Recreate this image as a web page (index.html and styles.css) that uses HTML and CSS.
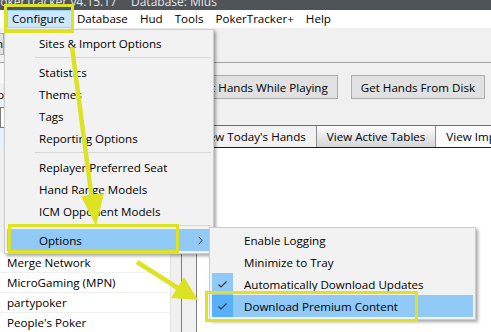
FILE: index.html
```html
<!DOCTYPE html>
<html>
<head>
<meta charset="utf-8">
<link rel="stylesheet" href="styles.css">
</head>
<body>
<div class="app">
  <header class="titlebar">
    <span class="title-text"><span>PokerTracker v4.15.17</span><span>Database: Mius</span></span>
  </header>
  <nav class="menubar">
    <span class="mb-item is-hot">Configure</span>
    <span class="mb-item">Database</span>
    <span class="mb-item">Hud</span>
    <span class="mb-item">Tools</span>
    <span class="mb-item">PokerTracker+</span>
    <span class="mb-item">Help</span>
  </nav>
  <div class="toolbar"><span class="tb-btn">Open</span></div>
  <div class="workspace">
    <aside class="left">
      <div class="left-top">
        <div class="lt-pad"></div>
        <div class="lt-label">p</div>
        <div class="lt-input"></div>
        <div class="lt-sel"></div>
      </div>
      <div class="site-list">
        <div class="site-row">Merge Network</div>
        <div class="site-row">MicroGaming (MPN)</div>
        <div class="site-row">partypoker</div>
        <div class="site-row">People's Poker</div>
      </div>
    </aside>
    <div class="splitter"></div>
    <section class="right">
      <div class="btnrow">
        <button class="btn">Get Hands While Playing</button>
        <button class="btn">Get Hands From Disk</button>
      </div>
      <div class="tabs">
        <div class="tab">View Today's Hands</div>
        <div class="tab is-active">View Active Tables</div>
        <div class="tab is-last">View Imported Hands</div>
      </div>
      <div class="tab-body"></div>
    </section>
  </div>

  <div class="menu">
    <div class="mi">Sites &amp; Import Options</div>
    <div class="msep"></div>
    <div class="mi">Statistics</div>
    <div class="mi">Themes</div>
    <div class="mi">Tags</div>
    <div class="mi">Reporting Options</div>
    <div class="msep"></div>
    <div class="mi">Replayer Preferred Seat</div>
    <div class="mi">Hand Range Models</div>
    <div class="mi">ICM Opponent Models</div>
    <div class="msep"></div>
    <div class="mi is-open">Options<svg class="chev" width="5" height="9" viewBox="0 0 5 9"><path d="M0.8 0.8 L4 4.5 L0.8 8.2" fill="none" stroke="#333" stroke-width="1"/></svg></div>
  </div>

  <div class="submenu">
    <div class="si"><span class="chk"></span>Enable Logging</div>
    <div class="si"><span class="chk"></span>Minimize to Tray</div>
    <div class="si is-checked"><span class="chk"><svg width="21" height="22" viewBox="0 0 21 22"><path d="M6.5 11.5 L9 14 L14.5 8.5" fill="none" stroke="#333" stroke-width="1.1"/></svg></span>Automatically Download Updates</div>
    <div class="si is-checked is-hover"><span class="chk"><svg width="21" height="22" viewBox="0 0 21 22"><path d="M6.5 11.5 L9 14 L14.5 8.5" fill="none" stroke="#333" stroke-width="1.1"/></svg></span>Download Premium Content</div>
  </div>

  <div class="mark mark-configure"></div>
  <div class="mark mark-options"></div>
  <div class="mark mark-download"></div>

  <svg class="arrows" width="491" height="332" viewBox="0 0 491 332">
    <line x1="72" y1="47" x2="92" y2="200" stroke="#dde222" stroke-width="4.5"/>
    <polygon points="96,226 81,196 104,193" fill="#dde222"/>
    <line x1="137" y1="262" x2="181" y2="290" stroke="#dde222" stroke-width="4.5"/>
    <polygon points="198,300 171,298 184,277" fill="#dde222"/>
  </svg>
</div>
</body>
</html>
```

FILE: styles.css
```css
* { box-sizing: border-box; margin: 0; padding: 0; }
html, body { width: 491px; height: 332px; overflow: hidden; }
body {
  font-family: "Open Sans", "Noto Sans", "DejaVu Sans", sans-serif;
  font-size: 11.6px;
  color: #000;
  background: #f0f0f0;
}
.app {
  position: relative;
  width: 491px;
  height: 332px;
  overflow: hidden;
  display: flex;
  flex-direction: column;
}

/* title bar */
.titlebar {
  height: 10px;
  flex: none;
  background: #4f5459;
  color: #e6e6e6;
  overflow: hidden;
  font-size: 12px;
  line-height: 12px;
  white-space: nowrap;
}
.title-text { display: flex; gap: 14px; margin: -4px 0 0 -7px; }

/* menu bar */
.menubar {
  height: 18px;
  flex: none;
  background: #fff;
  display: flex;
  padding-left: 7px;
  line-height: 18px;
  white-space: nowrap;
}
.mb-item { padding: 0 7px 0 5px; }
.mb-item.is-hot { background: #cce8ff; box-shadow: inset 0 0 0 1px #99d1ff; }

/* toolbar */
.toolbar {
  height: 35px;
  flex: none;
  border-bottom: 1px solid #a0a0a0;
  display: flex;
  align-items: flex-start;
}
.tb-btn {
  margin: 5px 0 0 -36px;
  width: 40px;
  height: 22px;
  background: #e1e1e1;
  border: 1px solid #adadad;
  text-align: right;
  line-height: 20px;
  padding-right: 0;
}

/* workspace */
.workspace {
  flex: 1;
  min-height: 0;
  display: grid;
  grid-template-columns: 181px 16px 1fr;
}
.left {
  display: flex;
  flex-direction: column;
  overflow: hidden;
  background: #f0f0f0;
}
.left-top { height: 190px; flex: none; }
.lt-pad { height: 20px; background: #f9f9f9; }
.lt-label { height: 24px; line-height: 24px; margin-left: -3px; }
.lt-input { height: 21px; background: #fff; border: 1px solid #7a7a7a; }
.lt-sel { height: 20px; background: #e5f1fb; }
.site-list {
  flex: 1;
  background: #fff;
  margin-right: 10px;
  border-right: 1px solid #e3e3e3;
}
.site-row {
  height: 20px;
  line-height: 20px;
  padding-left: 7px;
  border-bottom: 1px solid #f0f0f0;
  white-space: nowrap;
}
.splitter {
  background: #f0f0f0;
  border-left: 1px solid #7f7f7f;
  border-right: 1px solid #7f7f7f;
}
.right {
  display: flex;
  flex-direction: column;
  overflow: hidden;
  min-width: 0;
}
.btnrow {
  height: 62px;
  flex: none;
  display: flex;
  justify-content: flex-end;
  align-items: flex-start;
  gap: 13px;
  padding: 12px 6px 0 0;
}
.btn {
  flex: none;
  height: 24px;
  padding: 0 9px;
  background: #e1e1e1;
  border: 1px solid #adadad;
  font: inherit;
  color: #000;
  white-space: nowrap;
}
.tabs {
  height: 23px;
  flex: none;
  display: flex;
  margin-left: -8px;
  border-top: 1px solid #6e6e6e;
  border-bottom: 1px solid #1e1e1e;
  white-space: nowrap;
}
.tab {
  flex: none;
  padding: 0 10px;
  line-height: 21px;
  border-right: 1px solid #8c8c8c;
  background: #f2f2f2;
}
.tab.is-active { background: linear-gradient(#fdfdfd, #d4d4d4); }
.tab.is-last { background: #fbfbfb; border-right: 0; }
.tab-body { flex: 1; background: #fff; }

/* dropdown menu */
.menu {
  position: absolute;
  left: 4px;
  top: 29px;
  width: 210px;
  background: #f2f2f2;
  border: 1px solid #ccc;
  padding: 2px;
  box-shadow: 2px 2px 3px rgba(0, 0, 0, 0.35);
}
.mi {
  height: 22px;
  display: flex;
  align-items: center;
  padding-left: 32px;
  white-space: nowrap;
}
.mi.is-open { background: #91c9f7; }
.chev { margin-left: auto; margin-right: 8px; }
.msep { height: 7px; display: flex; align-items: center; padding-left: 28px; }
.msep::before { content: ""; flex: 1; height: 1px; background: #d7d7d7; }

/* submenu */
.submenu {
  position: absolute;
  left: 209px;
  top: 227px;
  width: 267px;
  background: #f2f2f2;
  border: 1px solid #ccc;
  padding: 1px 2px 2px;
  box-shadow: 2px 2px 3px rgba(0, 0, 0, 0.35);
}
.si {
  height: 22px;
  display: flex;
  align-items: center;
  white-space: nowrap;
}
.chk {
  flex: none;
  width: 21px;
  height: 22px;
  margin-right: 11px;
  display: flex;
}
.si.is-checked .chk { background: #90c8f6; }
.si.is-hover { background: #91c9f7; }
.si.is-hover .chk { background: #56b0fa; }

/* annotation overlays */
.mark { position: absolute; border: 3px solid #dde222; }
.mark-configure { left: 4px; top: 4px; width: 70px; height: 29px; }
.mark-options { left: 8px; top: 224px; width: 171px; height: 29px; }
.mark-download { left: 205px; top: 291px; width: 213px; height: 31px; }
.arrows { position: absolute; left: 0; top: 0; pointer-events: none; }
```
